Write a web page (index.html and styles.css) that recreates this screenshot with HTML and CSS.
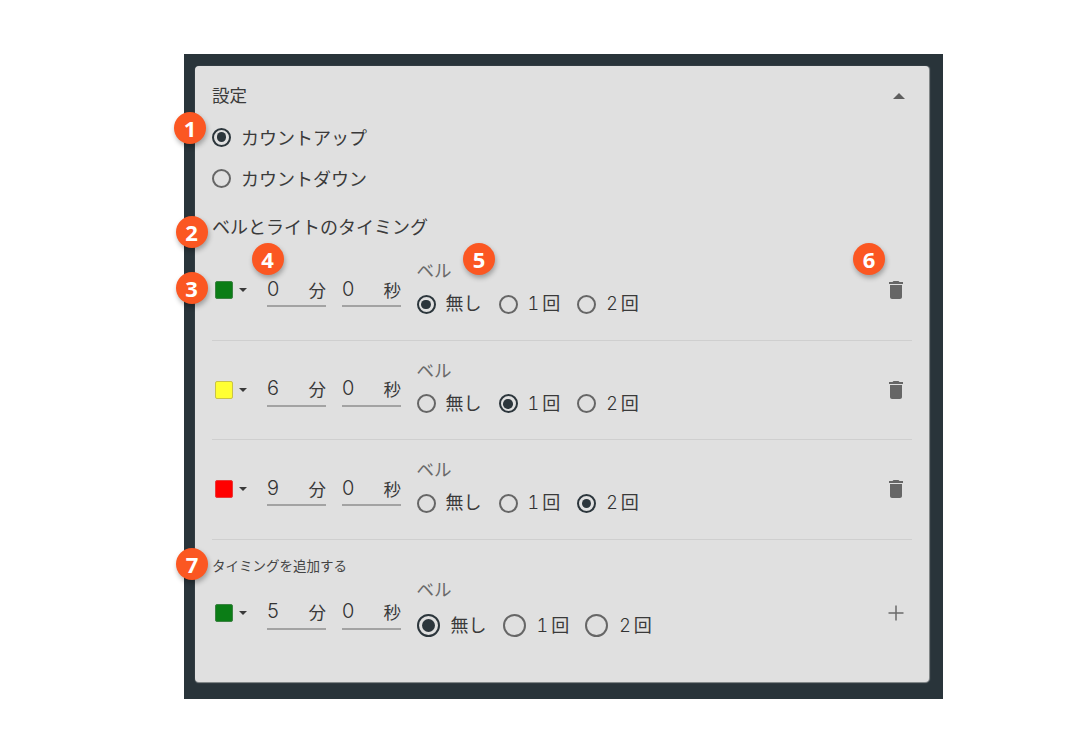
FILE: index.html
```html
<!DOCTYPE html>
<html lang="ja">
<head>
<meta charset="utf-8">
<title>設定</title>
<link rel="stylesheet" href="styles.css">
</head>
<body>
<div class="frame">
  <div class="panel">
    <div class="head">
      <span class="head-title">設定</span>
      <svg class="head-arrow" viewBox="0 0 12 6"><path d="M0 6 6 0l6 6z"/></svg>
    </div>
    <div class="mode"><span class="radio on"></span><span>カウントアップ</span></div>
    <div class="mode"><span class="radio"></span><span>カウントダウン</span></div>
    <div class="section-title">ベルとライトのタイミング</div>

    <div class="row">
      <div class="color"><span class="swatch green"></span><span class="caret"></span></div>
      <div class="time"><span class="num">0</span><span class="unit">分</span></div>
      <div class="time"><span class="num">0</span><span class="unit">秒</span></div>
      <div class="bell">
        <div class="bell-label">ベル</div>
        <div class="choices">
          <div class="choice"><span class="radio on"></span><span>無し</span></div>
          <div class="choice"><span class="radio"></span><span><span class="digit">1</span>回</span></div>
          <div class="choice"><span class="radio"></span><span><span class="digit">2</span>回</span></div>
        </div>
      </div>
      <svg class="trash" viewBox="0 0 24 24"><path d="M6 19c0 1.1.9 2 2 2h8c1.1 0 2-.9 2-2V7H6v12zM19 4h-3.5l-1-1h-5l-1 1H5v2h14V4z"/></svg>
    </div>

    <div class="row">
      <div class="color"><span class="swatch yellow"></span><span class="caret"></span></div>
      <div class="time"><span class="num">6</span><span class="unit">分</span></div>
      <div class="time"><span class="num">0</span><span class="unit">秒</span></div>
      <div class="bell">
        <div class="bell-label">ベル</div>
        <div class="choices">
          <div class="choice"><span class="radio"></span><span>無し</span></div>
          <div class="choice"><span class="radio on"></span><span><span class="digit">1</span>回</span></div>
          <div class="choice"><span class="radio"></span><span><span class="digit">2</span>回</span></div>
        </div>
      </div>
      <svg class="trash" viewBox="0 0 24 24"><path d="M6 19c0 1.1.9 2 2 2h8c1.1 0 2-.9 2-2V7H6v12zM19 4h-3.5l-1-1h-5l-1 1H5v2h14V4z"/></svg>
    </div>

    <div class="row">
      <div class="color"><span class="swatch red"></span><span class="caret"></span></div>
      <div class="time"><span class="num">9</span><span class="unit">分</span></div>
      <div class="time"><span class="num">0</span><span class="unit">秒</span></div>
      <div class="bell">
        <div class="bell-label">ベル</div>
        <div class="choices">
          <div class="choice"><span class="radio"></span><span>無し</span></div>
          <div class="choice"><span class="radio"></span><span><span class="digit">1</span>回</span></div>
          <div class="choice"><span class="radio on"></span><span><span class="digit">2</span>回</span></div>
        </div>
      </div>
      <svg class="trash" viewBox="0 0 24 24"><path d="M6 19c0 1.1.9 2 2 2h8c1.1 0 2-.9 2-2V7H6v12zM19 4h-3.5l-1-1h-5l-1 1H5v2h14V4z"/></svg>
    </div>

    <div class="add-title">タイミングを追加する</div>
    <div class="row add-row">
      <div class="color"><span class="swatch green"></span><span class="caret"></span></div>
      <div class="time"><span class="num">5</span><span class="unit">分</span></div>
      <div class="time"><span class="num">0</span><span class="unit">秒</span></div>
      <div class="bell">
        <div class="bell-label">ベル</div>
        <div class="choices">
          <div class="choice"><span class="radio on"></span><span>無し</span></div>
          <div class="choice"><span class="radio"></span><span><span class="digit">1</span>回</span></div>
          <div class="choice"><span class="radio"></span><span><span class="digit">2</span>回</span></div>
        </div>
      </div>
      <svg class="plus" viewBox="0 0 24 24"><path d="M12 4.500v15M4.500 12h15"/></svg>
    </div>
  </div>

  <span class="badge b1">1</span>
  <span class="badge b2">2</span>
  <span class="badge b3">3</span>
  <span class="badge b4">4</span>
  <span class="badge b5">5</span>
  <span class="badge b6">6</span>
  <span class="badge b7">7</span>
</div>
</body>
</html>
```
FILE: styles.css
```css
* { box-sizing: border-box; }
html, body { margin: 0; padding: 0; background: #fff; }
body {
  width: 1080px;
  height: 734px;
  overflow: hidden;
  font-family: Roboto, "Noto Sans CJK JP", sans-serif;
  color: #3a3a3a;
  font-size: 18px;
  padding: 54px 0 0 184px;
}
.frame {
  position: relative;
  width: 759px;
  height: 645px;
  background: #29343a;
  padding: 12px 14.500px 17px 11px;
}
.panel {
  height: 616px;
  background: #e0e0e0;
  border-radius: 4px;
  padding: 0 17px;
  box-shadow: 0 1px 1px #8a8f91, 1px 0 1px #8a8f91;
}
.head {
  height: 60px;
  display: flex;
  align-items: center;
  justify-content: space-between;
}
.head-title { font-size: 17.500px; margin-top: -4px; }
.head-arrow { width: 12px; height: 6px; margin: 0 7px 0 0; fill: #5e5e5e; }
.mode {
  height: 41px;
  display: flex;
  align-items: center;
  gap: 10px;
  margin-top: -9.500px;
  margin-bottom: 9.500px;
}
.mode span:last-child { margin-top: -1px; }
.radio {
  flex: none;
  width: 19px;
  height: 19px;
  border: 2px solid #666;
  border-radius: 50%;
  display: flex;
  align-items: center;
  justify-content: center;
}
.radio.on { border-color: #2c363c; }
.radio.on::after {
  content: "";
  width: 9.500px;
  height: 9.500px;
  border-radius: 50%;
  background: #2c363c;
}
.section-title { height: 34px; line-height: 42px; margin-top: -1px; }
.row {
  height: 99.500px;
  display: flex;
  align-items: center;
  border-bottom: 1px solid #cfcfcf;
}
.color {
  width: 55px;
  display: flex;
  align-items: center;
  padding-left: 3px;
}
.swatch {
  width: 18px;
  height: 18px;
  border-radius: 2px;
  border: 1px solid transparent;
}
.green { background: #0b7d16; border-color: #3c8243; }
.yellow { background: #ffff33; border-color: #c9c24a; }
.red { background: #ff0000; border-color: #e83a3a; }
.caret {
  margin-left: 6px;
  border-left: 4.500px solid transparent;
  border-right: 4.500px solid transparent;
  border-top: 4.500px solid #3a3a3a;
}
.time {
  width: 59px;
  height: 34px;
  margin-right: 16px;
  display: flex;
  align-items: center;
  justify-content: space-between;
  border-bottom: 2px solid #a3a3a3;
  font-size: 17.500px;
  line-height: 32px;
}
.num { font-family: Inter, Roboto, sans-serif; font-size: 20px; font-weight: 300; color: #333; margin-top: -1px; }
.unit { padding-top: 3px; }
.bell { flex: 1; margin-left: -0.500px; padding-bottom: 5px; }
.bell-label { color: #6a6a6a; font-size: 17.500px; line-height: 24px; margin-bottom: 9px; }
.choices { display: flex; gap: 17px; line-height: 24px; }
.choice { display: flex; align-items: center; gap: 10px; }
.digit { font-family: Inter, Roboto, sans-serif; font-feature-settings: "tnum"; letter-spacing: 3px; font-weight: 300; color: #333; }
.trash { width: 24px; height: 24px; fill: #666; margin-right: 4px; }
.plus { width: 24px; height: 24px; stroke: #6a6a6a; stroke-width: 1.500; fill: none; margin-right: 4px; }
.add-title { height: 38px; line-height: 52px; font-size: 13.500px; color: #444; }
.add-row { height: 70px; border-bottom: 0; }
.add-row .bell { padding-bottom: 10px; }
.add-row .choices { gap: 16px; }
.add-row .choice { gap: 11px; }
.add-row .radio { width: 23px; height: 23px; }
.add-row .radio.on::after { width: 13px; height: 13px; }
.add-row .bell-label { margin-bottom: 12px; }
.badge {
  position: absolute;
  width: 32px;
  height: 32px;
  border-radius: 50%;
  background: #fb5722;
  color: #fff;
  font: 700 22px/32px "Open Sans", sans-serif;
  text-align: center;
  box-shadow: 1px 3px 5px rgba(0, 0, 0, .3);
}
.b1 { left: -10px; top: 58px; }
.b2 { left: -8.500px; top: 162px; }
.b3 { left: -8.500px; top: 218px; }
.b4 { left: 67.500px; top: 189px; }
.b5 { left: 279px; top: 189px; }
.b6 { left: 669px; top: 189px; }
.b7 { left: -8px; top: 494px; }
```
